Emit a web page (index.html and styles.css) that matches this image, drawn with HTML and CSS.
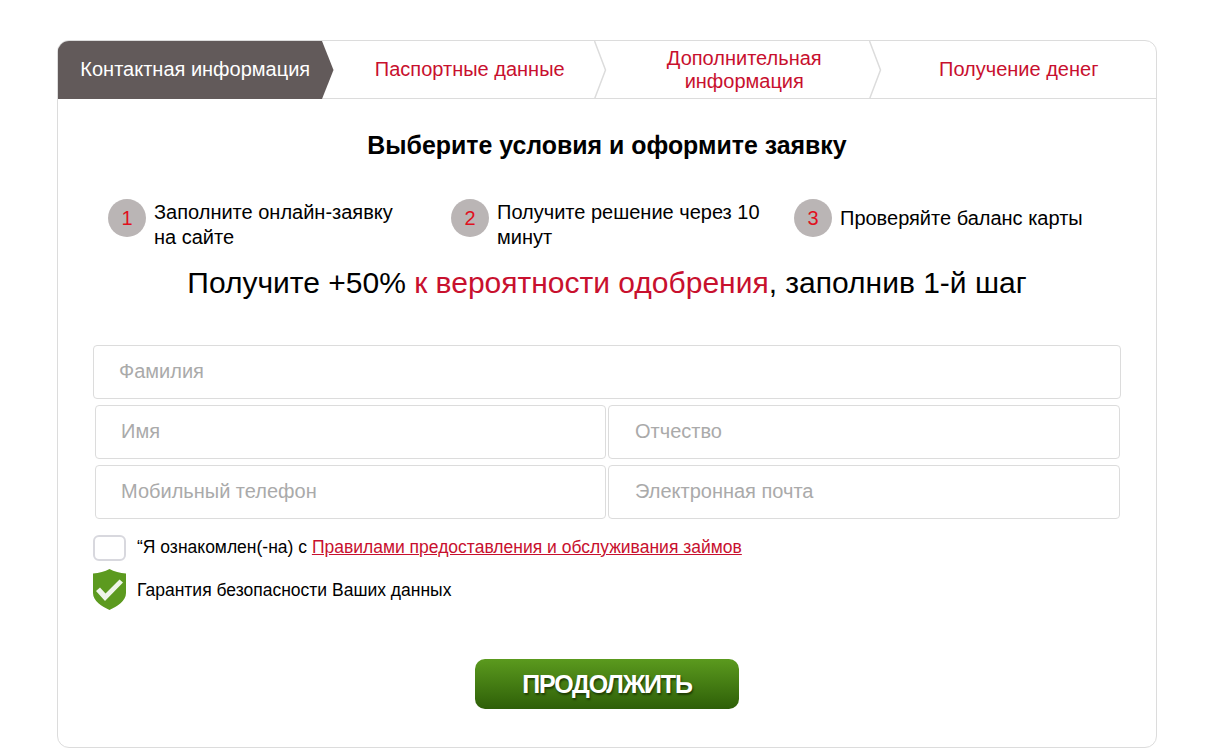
FILE: index.html
```html
<!DOCTYPE html>
<html lang="ru">
<head>
<meta charset="utf-8">
<title>Заявка</title>
<link rel="stylesheet" href="styles.css">
</head>
<body>
<main class="card">
  <nav class="tabs">
    <div class="tab tab-active">Контактная информация
      <svg class="tab-arrow" width="12" height="58" viewBox="0 0 12 58"><path d="M0 0L11.500 29L0 58Z" fill="#625a5a"/></svg>
    </div>
    <div class="tab">Паспортные данные
      <svg class="tab-sep" width="13" height="58" viewBox="0 0 13 58"><path d="M0.500 0L11.500 29L0.500 58" fill="none" stroke="#dcdcdc" stroke-width="1.500"/></svg>
    </div>
    <div class="tab tab-double">Дополнительная<br>информация
      <svg class="tab-sep" width="13" height="58" viewBox="0 0 13 58"><path d="M0.500 0L11.500 29L0.500 58" fill="none" stroke="#dcdcdc" stroke-width="1.500"/></svg>
    </div>
    <div class="tab">Получение денег</div>
  </nav>

  <h1 class="title">Выберите условия и оформите заявку</h1>

  <ol class="steps">
    <li class="step"><span class="step-num">1</span><span class="step-text">Заполните онлайн-заявку на&nbsp;сайте</span></li>
    <li class="step"><span class="step-num">2</span><span class="step-text">Получите решение через 10 минут</span></li>
    <li class="step step-short"><span class="step-num">3</span><span class="step-text">Проверяйте баланс карты</span></li>
  </ol>

  <p class="promo">Получите +50% <span class="accent">к вероятности одобрения</span>, заполнив 1-й шаг</p>

  <form class="form">
    <input class="field field-full" type="text" placeholder="Фамилия">
    <div class="field-row">
      <input class="field" type="text" placeholder="Имя">
      <input class="field field-right" type="text" placeholder="Отчество">
    </div>
    <div class="field-row">
      <input class="field" type="text" placeholder="Мобильный телефон">
      <input class="field field-right" type="text" placeholder="Электронная почта">
    </div>

    <label class="agree">
      <input class="check" type="checkbox">
      <span class="agree-text">“Я ознакомлен(-на) с <a class="rules" href="#">Правилами предоставления и обслуживания займов</a></span>
    </label>

    <div class="secure">
      <svg class="shield" width="33" height="41" viewBox="0 0 33 41">
        <path d="M16.500 0C12 2.500 6 4 0 4.500V24C0 32 9 37.500 16.500 41C24 37.500 33 32 33 24V4.500C27 4 21 2.500 16.500 0Z" fill="#5c9a1f"/>
        <path d="M3 22L12 32L30 13.500L26.500 10.500L12.500 24.500L7 18.500Z" fill="#fff" opacity="0.900"/>
      </svg>
      <span class="secure-text">Гарантия безопасности Ваших данных</span>
    </div>

    <div class="actions">
      <button class="submit" type="button">ПРОДОЛЖИТЬ</button>
    </div>
  </form>
</main>
</body>
</html>
```
FILE: styles.css
```css
* { box-sizing: border-box; }
html, body { margin: 0; padding: 0; background: #fff; }
body {
  font-family: "Liberation Sans", Arial, sans-serif;
  color: #000;
  padding: 40px 59px 0 57px;
  height: 749px;
  overflow: hidden;
}
.card {
  width: 1100px;
  height: 708px;
  border: 1px solid #dcdcdc;
  border-radius: 12px;
  overflow: hidden;
}
.tabs {
  display: grid;
  grid-template-columns: repeat(4, 1fr);
  align-items: start;
  height: 58px;
  border-bottom: 1px solid #dcdcdc;
}
.tab {
  position: relative;
  display: flex;
  align-items: center;
  justify-content: center;
  text-align: center;
  height: 57px;
  font-size: 20px;
  line-height: 23px;
  color: #c8102e;
}
.tab-double { padding-top: 1px; }
.tab-active {
  background: #625a5a;
  color: #fff;
  margin-right: 11px;
  padding-left: 11px;
  white-space: nowrap;
  box-shadow: 0 1px 0 #625a5a;
}
.tab-arrow {
  position: absolute;
  left: 100%;
  top: 0;
}
.tab-sep {
  position: absolute;
  right: 0;
  top: 0;
}
.title {
  margin: 32px 0 0;
  text-align: center;
  font-size: 24.900px;
  line-height: 29px;
  font-weight: 700;
}
.steps {
  list-style: none;
  margin: 39px 0 0;
  padding: 0 0 0 50px;
  display: grid;
  grid-template-columns: repeat(3, 343px);
}
.step {
  display: flex;
  gap: 8px;
  font-size: 20px;
  line-height: 25px;
}
.step-num {
  flex: none;
  width: 38px;
  height: 38px;
  border-radius: 50%;
  background: #bab5b5;
  color: #e0101e;
  display: flex;
  align-items: center;
  justify-content: center;
}
.step-text { width: 270px; padding-top: 1px; }
.step-short .step-text { padding-top: 7px; }
.promo {
  margin: 16px 0 0;
  text-align: center;
  font-size: 30px;
  line-height: 34px;
}
.accent { color: #c8102e; }
.form {
  margin: 45px 0 0;
  padding: 0 35px;
  display: flex;
  flex-direction: column;
}
.field {
  display: block;
  height: 54px;
  min-width: 0;
  width: 100%;
  padding: 0 25px 2px;
  border: 1px solid #dcdcdc;
  border-radius: 4px;
  background: #fff;
  font: 20px "Liberation Sans", Arial, sans-serif;
  color: #000;
  outline: none;
}
.field-right { padding-left: 26px; }
.field::placeholder { color: #aaa; opacity: 1; }
.field-row {
  display: grid;
  grid-template-columns: 511px 512px;
  gap: 2px;
  margin: 6px 0 0 2px;
}
.agree {
  display: flex;
  align-items: center;
  gap: 11px;
  margin-top: 16px;
  font-size: 17.500px;
  line-height: 24px;
}
.agree-text { padding-bottom: 2px; }
.check {
  appearance: none;
  flex: none;
  width: 33px;
  height: 26px;
  margin: 0;
  background: #fff;
  border: 2px solid #d8d8de;
  border-radius: 6px;
}
.rules { color: #c8102e; text-decoration: underline; }
.secure {
  display: flex;
  align-items: center;
  gap: 11px;
  margin-top: 8px;
  font-size: 17.500px;
  line-height: 39px;
}
.secure-text { padding-top: 2px; }
.shield { flex: none; display: block; }
.actions {
  display: flex;
  justify-content: center;
  margin-top: 49px;
}
.submit {
  width: 264px;
  height: 50px;
  padding: 0;
  border: 0;
  border-radius: 10px;
  background: linear-gradient(#5b9a1e, #2e5f08);
  color: #fff;
  font: 700 25px "Liberation Sans", Arial, sans-serif;
  letter-spacing: -1.200px;
  text-shadow: 1px 2px 2px #1f3d05;
}
```
